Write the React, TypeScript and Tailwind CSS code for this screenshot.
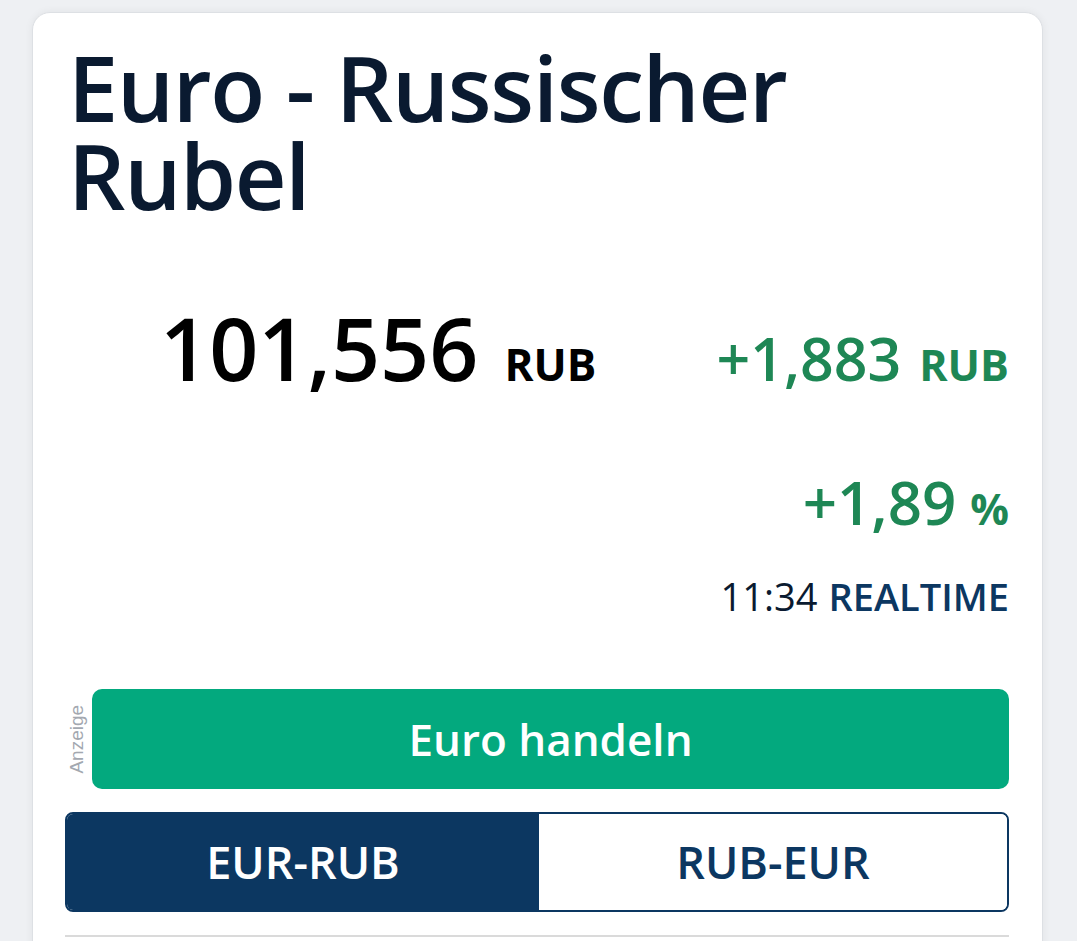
import React from "react";

export default function App() {
  return (
    <div className="min-h-[941px] w-[1077px] bg-[#eef0f3] pt-[12px] pl-[32px] font-['Open_Sans',sans-serif] overflow-hidden">
      <div className="w-[1011px] h-[960px] bg-white rounded-[18px] border border-[#dde0e4] shadow-[0_0_8px_rgba(0,0,0,0.06)] pl-[35px] pr-[33px] pt-[30px]">
        <h1 className="text-[90px] text-[#0a1a30] font-semibold tracking-[-1.3px] m-0">
          <span className="block leading-[88px]">Euro - Russischer</span>
          <span className="block leading-[88px]">Rubel</span>
        </h1>

        <div className="mt-[86px] flex items-baseline justify-between h-[82px]">
          <div className="pl-[92px] flex items-baseline text-black">
            <span className="text-[86px] leading-none font-semibold">101,556</span>
            <span className="ml-[26px] text-[44px] font-bold leading-none">RUB</span>
          </div>
          <div className="flex items-baseline text-[#1e8755]">
            <span className="text-[59px] leading-none font-semibold">+1,883</span>
            <span className="ml-[18px] text-[43px] font-bold leading-none">RUB</span>
          </div>
        </div>

        <div className="mt-[85px] flex justify-end items-baseline text-[#1e8755]">
          <span className="text-[60px] leading-none font-semibold">+1,89</span>
          <span className="ml-[14px] text-[43px] font-bold leading-none">%</span>
        </div>

        <div className="mt-[45px] flex justify-end items-baseline text-[38px] leading-none">
          <span className="text-[#0a1a30]">11:34</span>
          <span className="ml-[11px] font-semibold text-[#0c3761]">REALTIME</span>
        </div>

        <div className="mt-[74px] flex items-stretch">
          <div className="w-[24px] flex items-center justify-center -ml-[3px] mr-[3px]">
            <span className="-rotate-90 text-[19px] text-[#a3a8b0] whitespace-nowrap font-['Liberation_Sans',sans-serif]">Anzeige</span>
          </div>
          <button className="flex-1 h-[100px] rounded-[10px] bg-[#03a97e] text-white text-[44px] font-semibold flex items-center justify-center">
            Euro handeln
          </button>
        </div>

        <div className="mt-[23px] -ml-[3px] flex h-[100px] rounded-[8px] border-2 border-[#0c3761] overflow-hidden">
          <div className="w-[472px] bg-[#0c3761] text-white text-[45px] font-semibold flex items-center justify-center">
            EUR-RUB
          </div>
          <div className="flex-1 bg-white text-[#0c3761] text-[45px] font-semibold flex items-center justify-center">
            RUB-EUR
          </div>
        </div>

        <div className="mt-[23px] -ml-[3px] h-[2px] bg-[#dadada]" />
      </div>
    </div>
  );
}
